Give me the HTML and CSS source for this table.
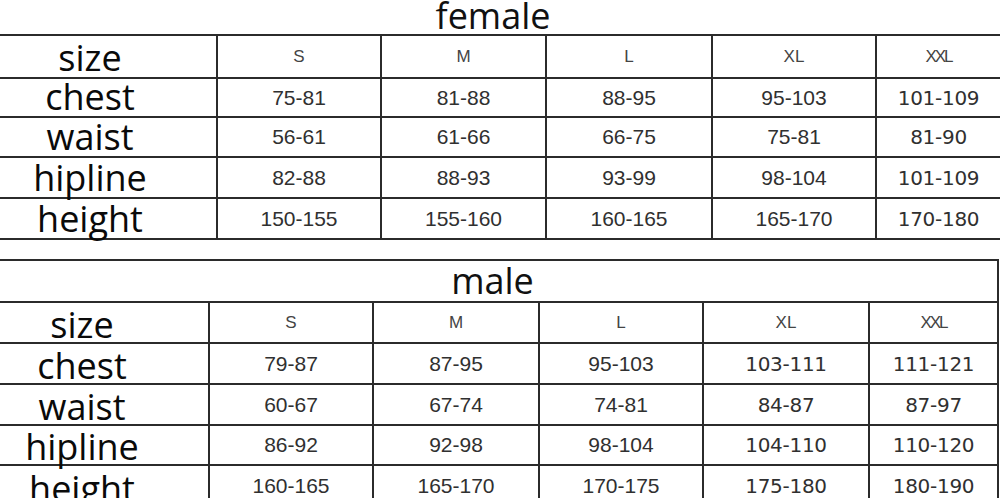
FILE: index.html
```html
<!DOCTYPE html>
<html lang="en">
<head>
<meta charset="utf-8">
<title>Size chart</title>
<link rel="stylesheet" href="styles.css">
</head>
<body>
<div class="page">
  <div class="title female-title">female</div>
  <div class="chart female">
    <div class="cell label">size</div>
    <div class="cell head">S</div>
    <div class="cell head">M</div>
    <div class="cell head">L</div>
    <div class="cell head">XL</div>
    <div class="cell head last xxl">XXL</div>

    <div class="cell label">chest</div>
    <div class="cell num">75-81</div>
    <div class="cell num">81-88</div>
    <div class="cell num">88-95</div>
    <div class="cell num">95-103</div>
    <div class="cell num dv last">101-109</div>

    <div class="cell label">waist</div>
    <div class="cell num">56-61</div>
    <div class="cell num">61-66</div>
    <div class="cell num">66-75</div>
    <div class="cell num">75-81</div>
    <div class="cell num dv last">81-90</div>

    <div class="cell label">hipline</div>
    <div class="cell num">82-88</div>
    <div class="cell num">88-93</div>
    <div class="cell num">93-99</div>
    <div class="cell num">98-104</div>
    <div class="cell num dv last">101-109</div>

    <div class="cell label">height</div>
    <div class="cell num">150-155</div>
    <div class="cell num">155-160</div>
    <div class="cell num">160-165</div>
    <div class="cell num">165-170</div>
    <div class="cell num dv last">170-180</div>
  </div>

  <div class="chart male">
    <div class="cell title male-title">male</div>

    <div class="cell label">size</div>
    <div class="cell head">S</div>
    <div class="cell head">M</div>
    <div class="cell head">L</div>
    <div class="cell head">XL</div>
    <div class="cell head xxl">XXL</div>

    <div class="cell label">chest</div>
    <div class="cell num">79-87</div>
    <div class="cell num">87-95</div>
    <div class="cell num">95-103</div>
    <div class="cell num dv">103-111</div>
    <div class="cell num dv">111-121</div>

    <div class="cell label">waist</div>
    <div class="cell num">60-67</div>
    <div class="cell num">67-74</div>
    <div class="cell num">74-81</div>
    <div class="cell num dv">84-87</div>
    <div class="cell num dv">87-97</div>

    <div class="cell label">hipline</div>
    <div class="cell num">86-92</div>
    <div class="cell num">92-98</div>
    <div class="cell num">98-104</div>
    <div class="cell num dv">104-110</div>
    <div class="cell num dv">110-120</div>

    <div class="cell label">height</div>
    <div class="cell num">160-165</div>
    <div class="cell num">165-170</div>
    <div class="cell num">170-175</div>
    <div class="cell num dv">175-180</div>
    <div class="cell num dv">180-190</div>
  </div>
</div>
</body>
</html>
```

FILE: styles.css
```css
html, body {
  margin: 0;
  padding: 0;
  background: #ffffff;
  overflow: hidden;
}

.page {
  width: 1000px;
  height: 498px;
  overflow: hidden;
}

.title {
  font-family: "Open Sans", "Liberation Sans", sans-serif;
  font-size: 36px;
  color: #111;
  text-align: center;
}

.female-title {
  height: 34px;
  line-height: 32px;
  padding-right: 14px;
  box-sizing: border-box;
}

.chart {
  display: grid;
  border-top: 2px solid #2b2b2b;
}

.female {
  width: 1000px;
  grid-template-columns: 218px 164px 165px 166px 164px 123px;
  grid-template-rows: 43px 39px 40px 41px 41px;
}

.male {
  width: 999px;
  margin-top: 19px;
  grid-template-columns: 210px 164px 166px 164px 166px 129px;
  grid-template-rows: 42px 41px 41px 41px 40px 42px;
}

.cell {
  box-sizing: border-box;
  border-right: 2px solid #2b2b2b;
  border-bottom: 2px solid #2b2b2b;
  display: flex;
  align-items: center;
  justify-content: center;
  min-width: 0;
}

.cell.last {
  border-right: none;
}

.male-title {
  grid-column: 1 / -1;
  line-height: 40px;
  padding-right: 12px;
}

.label {
  font-family: "Open Sans", "Liberation Sans", sans-serif;
  font-size: 36px;
  line-height: 30px;
  color: #0a0a0a;
  align-items: flex-end;
  white-space: nowrap;
}

.female .label {
  padding-right: 36px;
  padding-bottom: 4px;
}

.male .label {
  padding-right: 44px;
  padding-bottom: 2px;
}

.head {
  font-family: "Liberation Sans", Arial, sans-serif;
  font-size: 17px;
  color: #444;
}

.xxl {
  letter-spacing: -2px;
}

.num {
  font-family: "Liberation Sans", Arial, sans-serif;
  font-size: 21px;
  color: #303030;
}

.num.dv {
  font-family: "DejaVu Sans", sans-serif;
  font-size: 20px;
  letter-spacing: -0.3px;
}
```
